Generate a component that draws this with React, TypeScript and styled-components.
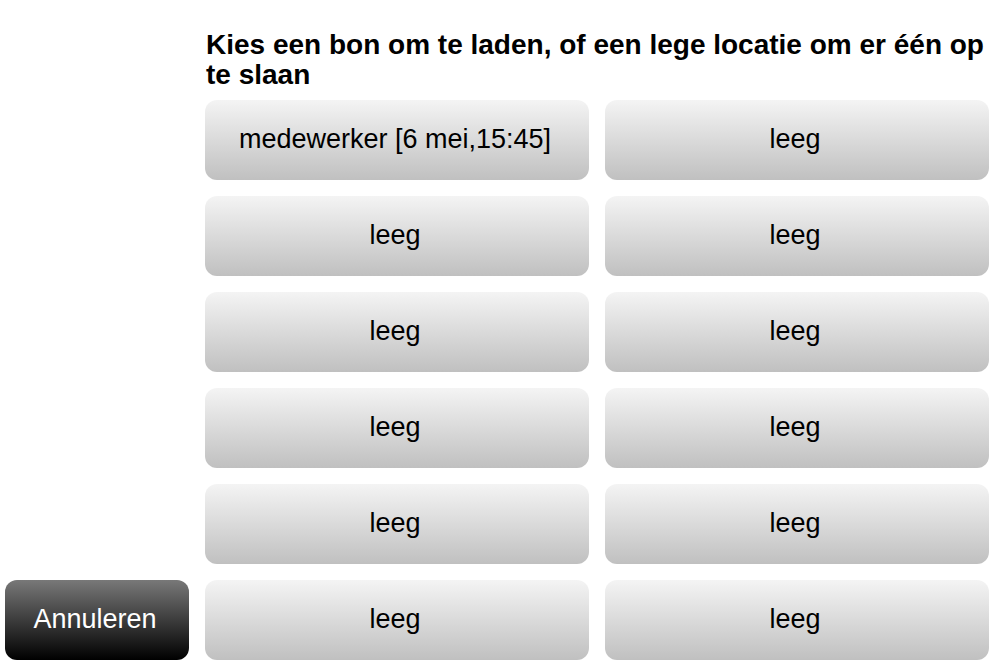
import React from "react";
import styled, { createGlobalStyle } from "styled-components";

const GlobalStyle = createGlobalStyle`
  html, body {
    margin: 0;
    padding: 0;
    background: #ffffff;
    font-family: "Liberation Sans", Arial, sans-serif;
  }
`;

const Page = styled.div`
  display: flex;
  gap: 16px;
  padding: 30px 6px 2px 5px;
  height: 662px;
  box-sizing: border-box;
`;

const Side = styled.div`
  width: 184px;
  display: flex;
  flex-direction: column;
  justify-content: flex-end;
`;

const Main = styled.div`
  flex: 1;
  display: flex;
  flex-direction: column;
  gap: 10px;
`;

const Title = styled.h1`
  margin: 0;
  padding-left: 1px;
  font-size: 28px;
  line-height: 30px;
  font-weight: 700;
  color: #000;
`;

const SlotGrid = styled.div`
  display: grid;
  grid-template-columns: 384px 384px;
  grid-auto-rows: 80px;
  gap: 16px;
`;

const Slot = styled.button`
  border: none;
  border-radius: 12px;
  background: linear-gradient(to bottom, #f4f4f4, #c0c0c0);
  color: #000;
  font-family: "Liberation Sans", Arial, sans-serif;
  font-size: 27px;
  display: flex;
  align-items: center;
  justify-content: center;
  padding: 0 4px 2px 0;
  cursor: pointer;
`;

const CancelButton = styled.button`
  height: 80px;
  border: none;
  border-radius: 12px;
  background: linear-gradient(to bottom, #787878, #000000);
  color: #fff;
  font-family: "Liberation Sans", Arial, sans-serif;
  font-size: 27px;
  padding: 0 4px 2px 0;
  cursor: pointer;
`;

const slots = [
  "medewerker [6 mei,15:45]",
  "leeg",
  "leeg",
  "leeg",
  "leeg",
  "leeg",
  "leeg",
  "leeg",
  "leeg",
  "leeg",
  "leeg",
  "leeg",
];

export default function App() {
  return (
    <>
      <GlobalStyle />
      <Page>
        <Side>
          <CancelButton>Annuleren</CancelButton>
        </Side>
        <Main>
          <Title>Kies een bon om te laden, of een lege locatie om er één op te slaan</Title>
          <SlotGrid>
            {slots.map((label, i) => (
              <Slot key={i}>{label}</Slot>
            ))}
          </SlotGrid>
        </Main>
      </Page>
    </>
  );
}
